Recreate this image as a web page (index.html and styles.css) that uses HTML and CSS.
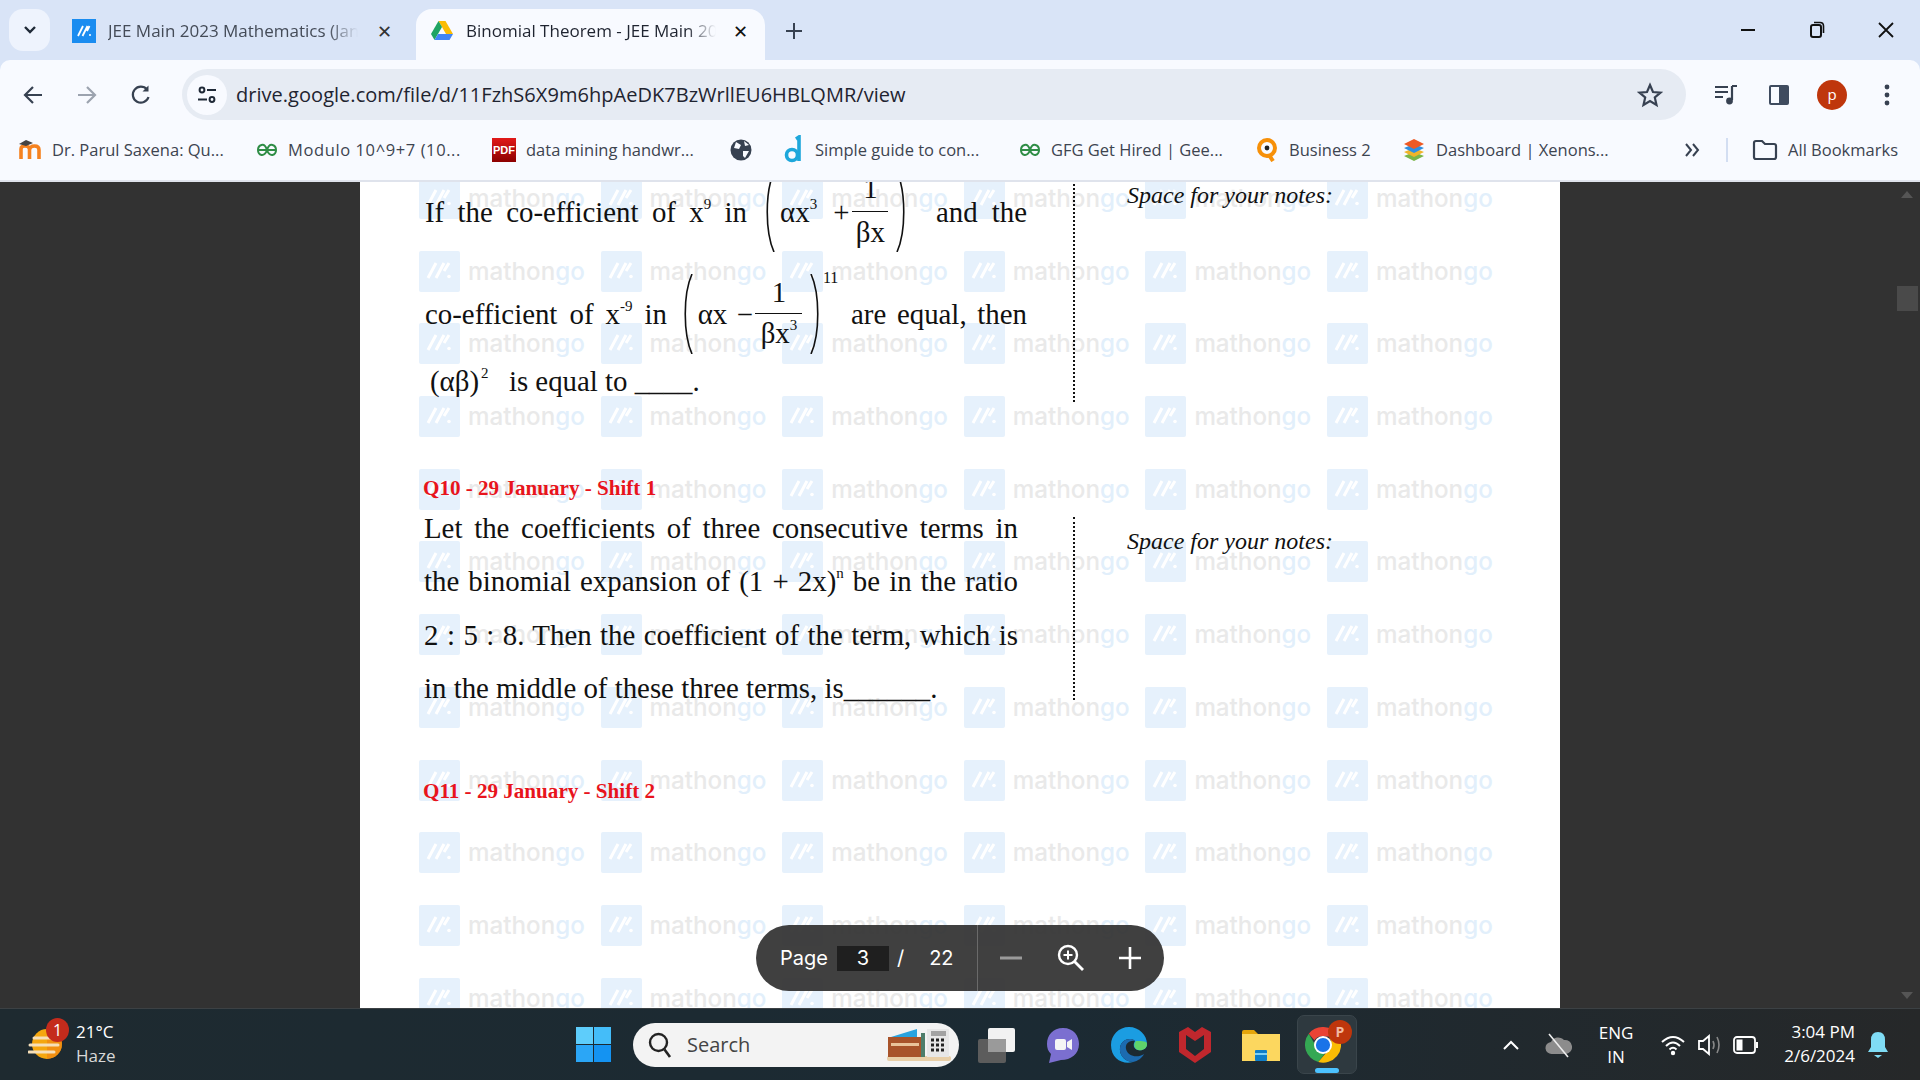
FILE: index.html
```html
<!DOCTYPE html>
<html>
<head>
<meta charset="utf-8">
<title>Binomial Theorem - JEE Main 2023</title>
<link rel="stylesheet" href="styles.css">
</head>
<body>
<svg class="defs" width="0" height="0">
    <symbol id="wmLogo" viewBox="0 0 41 41">
        <rect width="41" height="41" rx="2" fill="#e6f1fc"/>
        <path d="M9 27 L17 12 M17 27 L25 12 M25 20 L30 12" stroke="#fff" stroke-width="3" fill="none"/>
        <circle cx="30" cy="25.5" r="1.8" fill="#fff"/>
    </symbol>
</svg>

<div class="tabstrip">
    <div class="tab-search">
        <svg width="14" height="10" viewBox="0 0 14 10"><path d="M2 2 L7 7 L12 2" stroke="#1f2937" stroke-width="2.4" fill="none"/></svg>
    </div>
    <div class="tab">
        <svg class="tab-icon" width="24" height="24" viewBox="0 0 24 24"><rect width="24" height="24" fill="#1a8cf0"/><path d="M6 17 L11 7 M10.5 17 L15.5 7 M15 12 L17.5 7" stroke="#fff" stroke-width="1.8"/><circle cx="18" cy="16" r="1" fill="#fff"/></svg>
        <span class="tab-title">JEE Main 2023 Mathematics (Jan</span>
        <span class="tab-close">✕</span>
    </div>
    <div class="tab tab-active">
        <svg class="tab-icon" width="24" height="24" viewBox="0 0 24 24">
            <path d="M8.5 2 L15.5 2 L23 15 L16 15 Z" fill="#fbbc04"/>
            <path d="M8.5 2 L1 15 L4.5 21 L12 8 Z" fill="#1fa463"/>
            <path d="M4.5 21 L19.5 21 L23 15 L8 15 Z" fill="#4285f4"/>
        </svg>
        <span class="tab-title">Binomial Theorem - JEE Main 20</span>
        <span class="tab-close">✕</span>
    </div>
    <svg class="tab-plus" width="18" height="18" viewBox="0 0 18 18"><path d="M9 1 V17 M1 9 H17" stroke="#374151" stroke-width="2"/></svg>
    <div class="win-controls">
        <svg width="16" height="16" viewBox="0 0 16 16"><path d="M1 8 H15" stroke="#111" stroke-width="2"/></svg>
        <svg width="16" height="18" viewBox="0 0 16 18"><rect x="2" y="4" width="10" height="12" rx="2" stroke="#111" stroke-width="2" fill="none"/><path d="M5 1.5 H11 Q14.5 1.5 14.5 5 V12" stroke="#111" stroke-width="1.6" fill="none"/></svg>
        <svg width="16" height="16" viewBox="0 0 16 16"><path d="M1 1 L15 15 M15 1 L1 15" stroke="#111" stroke-width="1.8"/></svg>
    </div>
</div>

<div class="toolbar">
    <svg class="nav-icon" width="22" height="22" viewBox="0 0 22 22"><path d="M20 11 H3 M11 3 L3 11 L11 19" stroke="#374151" stroke-width="2.2" fill="none"/></svg>
    <svg class="nav-icon" width="22" height="22" viewBox="0 0 22 22"><path d="M2 11 H19 M11 3 L19 11 L11 19" stroke="#9ca3af" stroke-width="2.2" fill="none"/></svg>
    <svg class="nav-icon" width="22" height="22" viewBox="0 0 22 22"><path d="M18.5 13 A8 8 0 1 1 17 5.5" stroke="#374151" stroke-width="2.2" fill="none"/><path d="M18.5 1.5 V7.5 H12.5 Z" fill="#374151"/></svg>
    <div class="omnibox">
        <div class="site-info">
            <svg width="22" height="22" viewBox="0 0 22 22"><circle cx="6" cy="6" r="2.4" stroke="#1f2937" stroke-width="2" fill="none"/><path d="M11 6 H20 M2 15.5 H11" stroke="#1f2937" stroke-width="2.2" fill="none"/><circle cx="16" cy="15.5" r="2.4" stroke="#1f2937" stroke-width="2" fill="none"/></svg>
        </div>
        <span class="url">drive.google.com/file/d/11FzhS6X9m6hpAeDK7BzWrllEU6HBLQMR/view</span>
        <svg class="star" width="26" height="26" viewBox="0 0 26 26"><path d="M13 3 L16 10 L23.5 10.6 L17.8 15.5 L19.5 23 L13 19 L6.5 23 L8.2 15.5 L2.5 10.6 L10 10 Z" stroke="#374151" stroke-width="2.2" fill="none"/></svg>
    </div>
    <div class="toolbar-right">
        <svg width="24" height="22" viewBox="0 0 24 22"><path d="M1 3 H14 M1 8 H14 M1 13 H9" stroke="#374151" stroke-width="2.2"/><path d="M18 2 H23 M18 2 V16" stroke="#374151" stroke-width="2.2" fill="none"/><circle cx="15.5" cy="17" r="3.4" fill="#374151"/></svg>
        <svg width="22" height="22" viewBox="0 0 22 22"><rect x="1" y="1" width="20" height="20" rx="2" fill="#3f4b5f"/><rect x="3" y="3" width="8" height="16" fill="#f8faff"/></svg>
        <div class="avatar">p</div>
        <svg class="toolbar-dots" width="6" height="22" viewBox="0 0 6 22"><circle cx="3" cy="3" r="2.4" fill="#374151"/><circle cx="3" cy="11" r="2.4" fill="#374151"/><circle cx="3" cy="19" r="2.4" fill="#374151"/></svg>
    </div>
</div>

<div class="bookmarks">
    <div class="bm">
        <svg width="24" height="24" viewBox="0 0 24 24"><path d="M3 21 V11 Q3 8 7 8 Q11 8 11.5 11 V21 M11.5 12 Q12 8 16.5 8 Q21 8 21 12 V21" stroke="#f58220" stroke-width="3.6" fill="none"/><path d="M1 6 L8 2 L15 5 L8 8 Z" fill="#444"/></svg>
        <span class="bm-text">Dr. Parul Saxena: Qu...</span>
    </div>
    <div class="bm">
        <svg class="gfg" width="22" height="14" viewBox="0 0 22 14"><path d="M2 7 H20 M11 7 Q9 1 5.5 2 Q2 3 2 7 Q2 11 5.5 12 Q9 12.5 11 7 Q13 12.5 16.5 12 Q20 11 20 7 Q20 3 16.5 2 Q13 1 11 7" stroke="#2f8d46" stroke-width="2" fill="none"/></svg>
        <span class="bm-text bm-text-loose">Modulo 10^9+7 (10...</span>
    </div>
    <div class="bm">
        <div class="pdf-icon">PDF</div>
        <span class="bm-text">data mining handwr...</span>
    </div>
    <div class="bm">
        <svg width="22" height="22" viewBox="0 0 22 22"><circle cx="11" cy="11" r="10.5" fill="#374151"/><path d="M6 3 L11 6 L9 10 L4 9 Z M13 12 L19 12 L15 19 L13 17 Z M14 2 L19 6 L15 7 Z" fill="#f8faff"/></svg>
    </div>
    <div class="bm">
        <svg width="22" height="30" viewBox="0 0 22 30"><path d="M13 4 L16 2 V26" stroke="#1ea7db" stroke-width="3.6" fill="none"/><circle cx="9" cy="20" r="5.5" stroke="#1ea7db" stroke-width="3.6" fill="none"/></svg>
        <span class="bm-text">Simple guide to con...</span>
    </div>
    <div class="bm">
        <svg class="gfg" width="22" height="14" viewBox="0 0 22 14"><path d="M2 7 H20 M11 7 Q9 1 5.5 2 Q2 3 2 7 Q2 11 5.5 12 Q9 12.5 11 7 Q13 12.5 16.5 12 Q20 11 20 7 Q20 3 16.5 2 Q13 1 11 7" stroke="#2f8d46" stroke-width="2" fill="none"/></svg>
        <span class="bm-text">GFG Get Hired | Gee...</span>
    </div>
    <div class="bm">
        <svg width="24" height="24" viewBox="0 0 24 24"><circle cx="12" cy="10" r="8" stroke="#f79009" stroke-width="4" fill="none"/><circle cx="12" cy="10" r="2.4" fill="#222"/><path d="M14 17 L18 23" stroke="#f79009" stroke-width="4"/></svg>
        <span class="bm-short">Business 2</span>
    </div>
    <div class="bm">
        <svg width="24" height="24" viewBox="0 0 24 24"><path d="M12 14 L22 18 L12 23 L2 18 Z" fill="#7ab648"/><path d="M12 10 L22 14 L12 19 L2 14 Z" fill="#f0b429"/><path d="M12 6 L22 10 L12 15 L2 10 Z" fill="#2f8fe0"/><path d="M12 1 L22 6 L12 11 L2 6 Z" fill="#ee5a24"/></svg>
        <span class="bm-text">Dashboard | Xenons...</span>
    </div>
    <div class="bm-end">
        <svg width="16" height="14" viewBox="0 0 16 14"><path d="M2 1 L7 7 L2 13 M9 1 L14 7 L9 13" stroke="#374151" stroke-width="2" fill="none"/></svg>
        <div class="bm-sep"></div>
        <svg width="26" height="22" viewBox="0 0 26 22"><path d="M2 4 Q2 2 4 2 H10 L13 5 H22 Q24 5 24 7 V18 Q24 20 22 20 H4 Q2 20 2 18 Z" stroke="#374151" stroke-width="2.2" fill="none"/></svg>
        <span class="bm-all">All Bookmarks</span>
    </div>
</div>

<div class="viewer">
    <div class="page">
        <div class="watermark" id="watermark"></div>
        <div class="page-content">
            <div class="question q-first">
                <div class="q-body">
                    <div class="row row-tall">
                        <span class="words w-if">If the co-efficient of x<sup>9</sup> in</span>
                        <span class="math math-first">
                            <svg class="fence" width="14" height="80" viewBox="0 0 14 80"><path d="M12 0 C3 20 3 60 12 80" stroke="#111" stroke-width="1.6" fill="none"/></svg>
                            <span class="term">αx<sup>3</sup></span>
                            <span class="op op-plus">+</span>
                            <span class="frac"><span class="frac-num">1</span><span class="frac-den">βx</span></span>
                            <svg class="fence" width="14" height="80" viewBox="0 0 14 80"><path d="M2 0 C11 20 11 60 2 80" stroke="#111" stroke-width="1.6" fill="none"/></svg>
                        </span>
                        <span class="words w-and">and the</span>
                    </div>
                    <div class="row row-tall row-second">
                        <span class="words w-coef">co-efficient of x<sup>-9</sup> in</span>
                        <span class="math">
                            <svg class="fence" width="14" height="80" viewBox="0 0 14 80"><path d="M12 0 C3 20 3 60 12 80" stroke="#111" stroke-width="1.6" fill="none"/></svg>
                            <span class="term">αx</span>
                            <span class="op op-minus">−</span>
                            <span class="frac frac-wide"><span class="frac-num frac-num-low">1</span><span class="frac-den frac-den-tight">βx<sup>3</sup></span></span>
                            <svg class="fence" width="14" height="80" viewBox="0 0 14 80"><path d="M2 0 C11 20 11 60 2 80" stroke="#111" stroke-width="1.6" fill="none"/></svg>
                            <sup class="power">11</sup>
                        </span>
                        <span class="words w-are">are equal, then</span>
                    </div>
                    <div class="row-last">(αβ)<sup>2</sup>&nbsp; is equal to ____.</div>
                </div>
                <div class="notes notes-first">Space for your notes:</div>
            </div>

            <div class="q-heading q10">Q10 - 29 January - Shift 1</div>
            <div class="question q-second">
                <div class="q-body">
                    <div class="text-lines">
                        <div class="tline tline-just">Let the coefficients of three consecutive terms in</div>
                        <div class="tline tline-just">the binomial expansion of (1 + 2x)<sup>n</sup> be in the ratio</div>
                        <div class="tline tline-just">2 : 5 : 8. Then the coefficient of the term, which is</div>
                        <div class="tline">in the middle of these three terms, is______.</div>
                    </div>
                </div>
                <div class="notes notes-second">Space for your notes:</div>
            </div>
            <div class="q-heading q11">Q11 - 29 January - Shift 2</div>
        </div>
    </div>

    <div class="scroll-up"></div>
    <div class="scroll-thumb"></div>
    <div class="scroll-down"></div>

    <div class="pdf-bar">
        <span class="pdf-label">Page</span>
        <span class="pdf-input">3</span>
        <span class="pdf-slash">/</span>
        <span class="pdf-total">22</span>
        <div class="pdf-divider"></div>
        <svg class="pdf-minus" width="22" height="4" viewBox="0 0 22 4"><rect width="22" height="3" y="0.5" fill="#9a9a9a"/></svg>
        <svg class="pdf-zoom" width="28" height="28" viewBox="0 0 28 28"><circle cx="11" cy="11" r="9" stroke="#fff" stroke-width="2.4" fill="none"/><path d="M17.5 17.5 L26 26" stroke="#fff" stroke-width="2.8"/><path d="M11 6.5 V15.5 M6.5 11 H15.5" stroke="#fff" stroke-width="2"/></svg>
        <svg class="pdf-plus" width="22" height="22" viewBox="0 0 22 22"><path d="M11 0 V22 M0 11 H22" stroke="#fff" stroke-width="2.6"/></svg>
    </div>
</div>

<div class="taskbar">
    <div class="weather">
        <svg class="weather-icon" width="36" height="32" viewBox="0 0 36 32"><circle cx="19" cy="15" r="15" fill="#f5a70f"/><path d="M19 0 A15 15 0 0 1 19 30 Z" fill="#ef7f13" opacity="0.6"/><path d="M6 9 H24 M2 16 H30 M1 23 H26" stroke="#f6dfb8" stroke-width="3" stroke-linecap="round"/></svg>
        <span class="weather-badge">1</span>
        <div class="weather-text"><span>21°C</span><span class="weather-sub">Haze</span></div>
    </div>
    <svg class="win-logo" width="35" height="35" viewBox="0 0 35 35"><rect width="17" height="17" fill="#5ecdfb"/><rect x="18" width="17" height="17" fill="#44bdf9"/><rect y="18" width="17" height="17" fill="#2ba6f6"/><rect x="18" y="18" width="17" height="17" fill="#1493f2"/></svg>
    <div class="task-search">
        <svg width="24" height="26" viewBox="0 0 24 26"><circle cx="10.5" cy="10.5" r="8.5" stroke="#222" stroke-width="2.4" fill="none"/><path d="M16.5 17.5 L22 25" stroke="#222" stroke-width="2.6"/></svg>
        <span class="task-search-text">Search</span>
        <svg class="search-art" width="70" height="34" viewBox="0 0 70 34"><rect x="2" y="28" width="64" height="5" rx="2" fill="#e8cfa8"/><rect x="3" y="9" width="36" height="20" fill="#a8532a"/><path d="M6 9 L32 1 V9 Z" fill="#29a3e0"/><rect x="36" y="5" width="4" height="24" fill="#4d7d6a"/><rect x="6" y="15" width="28" height="3" fill="#e9c39a"/><rect x="42" y="1" width="22" height="28" fill="#e7e7e7"/><rect x="46" y="3" width="15" height="5" fill="#a3a3a3"/><path d="M46 12 H61 M46 17 H61 M46 22 H61" stroke="#222" stroke-width="3" stroke-dasharray="3 2"/></svg>
    </div>
    <div class="task-apps">
        <div class="task-app"><svg width="38" height="36" viewBox="0 0 38 36"><rect x="0" y="12" width="28" height="24" rx="2" fill="#5c5c5c"/><rect x="10" y="1" width="27" height="24" rx="2" fill="#f2f2f2"/><rect x="10" y="12" width="18" height="13" fill="#9a9a9a"/></svg></div>
        <div class="task-app"><svg width="34" height="36" viewBox="0 0 34 36"><path d="M17 1 C28 1 33 9 33 17 C33 27 25 33 15 33 L3 36 L5 27 C2 24 1 21 1 17 C1 8 7 1 17 1 Z" fill="#7b6fd0"/><rect x="9" y="12" width="11" height="11" rx="2" fill="#f5f5f5"/><path d="M21 15 L26 12 V23 L21 20 Z" fill="#f5f5f5"/></svg></div>
        <div class="task-app"><svg width="36" height="36" viewBox="0 0 36 36"><path d="M18 0 C28 0 36 8 36 17 C36 22 31 24 27 23 C22 22 22 17 24 14 C20 10 10 12 9 21 C8 29 15 35 22 35 C12 38 0 32 0 18 C0 8 8 0 18 0 Z" fill="#1b9de2"/><path d="M9 21 C8 29 15 35 22 35 C27 34 31 31 33 27 C27 31 17 30 15 22 C14 17 18 13 24 14 C20 10 10 12 9 21 Z" fill="#1c6bb0"/><path d="M25 14 C32 14 36 14 36 17 C36 22 31 24 27 23 C23 22 22 17 25 14 Z" fill="#5fd36a"/></svg></div>
        <div class="task-app"><svg width="32" height="36" viewBox="0 0 32 36"><path d="M0 5 L9 0 L16 5 L23 0 L32 5 V25 L16 36 L0 25 Z" fill="#c0272d"/><path d="M7 8 L16 14 L25 8 V22 L16 29 L7 22 Z" fill="#1e2a30"/></svg></div>
        <div class="task-app"><svg width="38" height="32" viewBox="0 0 38 32"><path d="M0 3 Q0 1 2 1 H12 L16 5 H37 V12 H0 Z" fill="#e5a50a"/><rect x="0" y="5" width="38" height="27" fill="#fcd75f"/><rect x="13" y="21" width="12" height="11" rx="1" fill="#0f7ec9"/><rect x="13" y="24" width="12" height="2" fill="#7fd0f5"/></svg></div>
        <div class="task-app">
            <div class="task-chrome">
                <svg class="chrome-icon" width="36" height="36" viewBox="0 0 38 38">
                    <path d="M19 0 A19 19 0 0 1 36 10 H19 A9 9 0 0 0 10 14 L4 7 A19 19 0 0 1 19 0 Z" fill="#ea4335"/>
                    <path d="M4 7 L13 23 A9 9 0 0 0 21 28 L14 37 A19 19 0 0 1 4 7 Z" fill="#34a853"/>
                    <path d="M36 10 A19 19 0 0 1 14 37 L25 24 A9 9 0 0 0 26 12 Z" fill="#fbbc04"/>
                    <circle cx="19" cy="19" r="9.5" fill="#fff"/><circle cx="19" cy="19" r="7.5" fill="#1a73e8"/>
                </svg>
                <span class="chrome-badge">P</span>
                <span class="chrome-bar"></span>
            </div>
        </div>
    </div>
    <div class="tray">
        <svg class="tray-up" width="16" height="10" viewBox="0 0 16 10"><path d="M1 9 L8 2 L15 9" stroke="#fff" stroke-width="2" fill="none"/></svg>
        <svg class="tray-cloud" width="28" height="26" viewBox="0 0 28 26"><path d="M8 22 A6 6 0 0 1 7 10 A8 8 0 0 1 20 8 A6 6 0 0 1 22 22 Z" fill="#8c8c8c"/><path d="M5 2 L24 25" stroke="#eee" stroke-width="1.6"/></svg>
        <div class="tray-lang"><span>ENG</span><span>IN</span></div>
        <svg class="tray-wifi" width="24" height="22" viewBox="0 0 24 22"><path d="M1 8 Q12 -2 23 8 M5 12 Q12 5 19 12 M8.5 15.5 Q12 12 15.5 15.5" stroke="#fff" stroke-width="2" fill="none"/><circle cx="12" cy="19" r="2.2" fill="#fff"/></svg>
        <svg class="tray-sound" width="24" height="24" viewBox="0 0 24 24"><path d="M1 8 H5 L11 3 V21 L5 16 H1 Z" stroke="#fff" stroke-width="1.8" fill="none"/><path d="M15 8 Q17 12 15 16 M19 4 Q23 12 19 20" stroke="#888" stroke-width="1.6" fill="none"/></svg>
        <svg class="tray-battery" width="26" height="18" viewBox="0 0 26 18"><rect x="1" y="1" width="21" height="16" rx="3" stroke="#fff" stroke-width="1.8" fill="none"/><rect x="3.5" y="3.5" width="6" height="11" fill="#fff"/><rect x="23" y="6" width="2" height="6" fill="#fff"/></svg>
        <div class="tray-clock"><span>3:04 PM</span><span>2/6/2024</span></div>
        <svg class="tray-bell" width="22" height="28" viewBox="0 0 22 28"><path d="M11 1 Q18 1 18 9 V16 L21 21 H1 L4 16 V9 Q4 1 11 1 Z" fill="#7fdcf5"/><path d="M7 24 H15 L11 27 Z" fill="#7fdcf5"/></svg>
    </div>
</div>

<script>
// watermark tiles repeat across the whole pdf page
var layer = document.getElementById('watermark');
var html = '';
for (var i = 0; i < 72; i++) {
    html += '<div class="wm-tile"><svg width="41" height="41"><use href="#wmLogo"/></svg>' +
        '<span class="wm-text">mathon<span class="wm-go">go</span></span></div>';
}
layer.innerHTML = html;
</script>
</body>
</html>
```

FILE: styles.css
```css
html, body {
    margin: 0;
    width: 1920px;
    height: 1080px;
    overflow: hidden;
    background-color: #d9e4f7;
    font-family: "Open Sans", "Noto Sans", sans-serif;
}

.defs {
    display: block;
    height: 0;
}

/* tab strip */
.tabstrip {
    height: 60px;
    background-color: #d9e4f7;
    display: flex;
    align-items: flex-end;
    box-sizing: border-box;
}

.tab-search {
    width: 41px;
    height: 42px;
    margin: 0 22px 9px 9px;
    background-color: #eef3fd;
    border-radius: 14px;
    display: flex;
    align-items: center;
    justify-content: center;
}

.tab {
    height: 51px;
    width: 344px;
    display: flex;
    align-items: center;
    box-sizing: border-box;
    font-size: 17px;
    color: #444b57;
}

.tab-icon {
    flex: none;
    margin-right: 12px;
    margin-top: -8px;
}

.tab-title {
    width: 250px;
    white-space: nowrap;
    overflow: hidden;
    margin-top: -8px;
    -webkit-mask-image: linear-gradient(to right, #000 88%, transparent 100%);
    mask-image: linear-gradient(to right, #000 88%, transparent 100%);
}

.tab-close {
    margin-left: 19px;
    margin-top: -8px;
    font-size: 18px;
    color: #333;
}

.tab-active {
    width: 349px;
    padding-left: 14px;
    background-color: #f8faff;
    border-radius: 16px 16px 0 0;
    color: #1f2430;
}

.tab-active .tab-close {
    margin-left: 17px;
    color: #111;
}

.tab-plus {
    margin: 0 0 20px 20px;
}

.win-controls {
    margin: 0 26px 21px auto;
    display: flex;
    align-items: center;
    gap: 53px;
}

/* toolbar */
.toolbar {
    height: 60px;
    background-color: #f8faff;
    border-radius: 10px 10px 0 0;
    display: flex;
    align-items: center;
    padding: 9px 0 0 22px;
    box-sizing: border-box;
}

.nav-icon {
    margin-right: 32px;
}

.nav-icon:nth-of-type(3) {
    margin-right: 30px;
}

.omnibox {
    width: 1504px;
    height: 51px;
    background-color: #e6ebf3;
    border-radius: 26px;
    display: flex;
    align-items: center;
    box-sizing: border-box;
    padding-left: 5px;
}

.site-info {
    width: 40px;
    height: 40px;
    border-radius: 50%;
    background-color: #f8faff;
    display: flex;
    align-items: center;
    justify-content: center;
    flex: none;
}

.url {
    margin-left: 9px;
    font-size: 20px;
    letter-spacing: 0.03px;
    color: #1f2430;
    white-space: nowrap;
}

.star {
    margin-left: auto;
    margin-right: 23px;
}

.toolbar-right {
    display: flex;
    align-items: center;
    margin-left: 28px;
    gap: 30px;
}

.avatar {
    width: 30px;
    height: 30px;
    border-radius: 50%;
    background-color: #bf360c;
    color: #fff;
    font-size: 15px;
    text-align: center;
    line-height: 28px;
    margin-left: -3px;
}

.toolbar-dots {
    margin-left: 7px;
}

/* bookmarks */
.bookmarks {
    height: 60px;
    background-color: #f8faff;
    border-bottom: 2px solid #dfe3ec;
    display: flex;
    align-items: center;
    padding-left: 18px;
    gap: 31px;
    font-size: 16.5px;
    color: #3d4450;
}

.bm {
    display: flex;
    align-items: center;
    gap: 10px;
    white-space: nowrap;
}

.bm-text {
    width: 173px;
    margin-top: -2px;
}

.bm-text-loose {
    letter-spacing: 0.6px;
}

.bm-short {
    width: 82px;
    margin-top: -2px;
}

.bm-all {
    margin-top: -2px;
    margin-left: 10px;
}

.pdf-icon {
    width: 24px;
    height: 24px;
    background: linear-gradient(#e11919, #8c0000);
    color: #fff;
    font-size: 11px;
    font-weight: 700;
    line-height: 24px;
    text-align: center;
    font-family: "Liberation Sans", sans-serif;
}

.bm-end {
    margin-left: auto;
    margin-right: 22px;
    display: flex;
    align-items: center;
    white-space: nowrap;
}

.bm-sep {
    width: 2px;
    height: 24px;
    background-color: #d3def2;
    margin: 0 24px 0 26px;
}

/* viewer and pdf page */
.viewer {
    height: 826px;
    background-color: #323232;
    position: relative;
    overflow: hidden;
}

.page {
    width: 1200px;
    height: 826px;
    margin-left: 360px;
    background-color: #fff;
    position: relative;
    overflow: hidden;
}

.watermark {
    position: absolute;
    top: -4px;
    left: 59px;
    display: grid;
    grid-template-columns: repeat(6, 181.6px);
    grid-auto-rows: 41px;
    row-gap: 31.7px;
}

.wm-tile {
    display: flex;
    align-items: center;
    gap: 8px;
    white-space: nowrap;
}

.wm-text {
    font-family: Inter, sans-serif;
    font-size: 24.2px;
    font-weight: 500;
    color: #e9e9e9;
}

.wm-go {
    color: #e2effb;
}

.page-content {
    position: relative;
    padding-left: 64px;
    margin-top: -10px;
    font-family: "Liberation Serif", "Times New Roman", serif;
    font-size: 28.85px;
    color: #111;
}

.question {
    display: flex;
}

.q-body {
    width: 651px;
    box-sizing: border-box;
    padding-right: 46px;
    border-right: 2px dotted #111;
    flex: none;
}

.q-first {
    height: 230px;
}

.q-second {
    height: 183px;
}

.row {
    display: flex;
    align-items: center;
    justify-content: space-between;
    white-space: nowrap;
}

.row-tall {
    height: 80px;
}

.row-second {
    margin-top: 22px;
}

.row-last {
    margin: 11px 0 0 6px;
    line-height: 32px;
    white-space: nowrap;
}

.row-last sup {
    margin: 0 6px 0 2px;
}

.words {
    display: block;
    text-align: justify;
    text-align-last: justify;
    white-space: normal;
}

.w-if {
    width: 322px;
    margin-left: 1px;
}

.w-and {
    width: 91px;
}

.w-coef {
    width: 242px;
    margin-left: 1px;
}

.w-are {
    width: 176px;
}

sup {
    font-size: 15px;
    line-height: 0;
    vertical-align: 13px;
}

.math {
    display: flex;
    align-items: center;
}

.math-first {
    margin-right: 12px;
}

.term {
    margin-left: 4px;
}

.op-plus {
    margin: 0 3px 0 16px;
}

.op-minus {
    margin: 0 2.5px 0 9.5px;
}

.frac {
    display: flex;
    flex-direction: column;
    align-items: center;
    width: 36px;
    margin-right: 6.5px;
}

.frac-wide {
    width: 47px;
}

.frac-num {
    height: 46px;
    line-height: 44px;
    border-bottom: 1.5px solid #111;
    width: 100%;
    text-align: center;
    box-sizing: border-box;
}

.frac-num-low {
    line-height: 49px;
}

.frac-den {
    height: 46px;
    line-height: 40px;
}

.frac-den-tight {
    line-height: 39px;
}

.power {
    align-self: flex-start;
    font-size: 16px;
    line-height: 20px;
    margin: 0;
    vertical-align: baseline;
}

.notes {
    margin-left: 52px;
    font-style: italic;
    font-size: 24px;
    line-height: 30px;
    white-space: nowrap;
}

.notes-first {
    padding-top: 8px;
}

.notes-second {
    padding-top: 9px;
}

.q-heading {
    font-weight: bold;
    font-size: 21.1px;
    line-height: 26px;
    color: #e8141c;
    margin-left: -1px;
    width: 260px;
}

.q10 {
    margin-top: 73px;
    margin-bottom: 16px;
}

.q11 {
    margin-top: 78px;
}

.text-lines {
    margin-top: -15px;
    line-height: 53.4px;
}

.tline {
    width: 594px;
    white-space: nowrap;
}

.tline-just {
    white-space: normal;
    text-align: justify;
    text-align-last: justify;
}

/* dark scrollbar */
.scroll-up, .scroll-down {
    position: absolute;
    right: 7px;
    width: 0;
    height: 0;
    border-left: 6px solid transparent;
    border-right: 6px solid transparent;
}

.scroll-up {
    top: 9px;
    border-bottom: 7px solid #555;
}

.scroll-down {
    bottom: 9px;
    border-top: 7px solid #555;
}

.scroll-thumb {
    position: absolute;
    right: 2px;
    top: 104px;
    width: 21px;
    height: 25px;
    background-color: #4a4a4a;
}

/* page controls over the pdf */
.pdf-bar {
    position: absolute;
    left: 756px;
    top: 743px;
    width: 408px;
    height: 66px;
    box-sizing: border-box;
    border-radius: 33px;
    background-color: rgba(50, 50, 50, 0.93);
    color: #fff;
    display: flex;
    align-items: center;
    padding-left: 24px;
    font-family: Inter, "Open Sans", sans-serif;
    font-size: 20px;
}

.pdf-input {
    width: 52px;
    height: 25px;
    line-height: 25px;
    background-color: #1f1f1f;
    text-align: center;
    margin-left: 9px;
}

.pdf-slash {
    margin-left: 8px;
}

.pdf-total {
    margin-left: 25px;
}

.pdf-divider {
    width: 1px;
    height: 66px;
    background-color: #6a6a6a;
    margin-left: 23px;
}

.pdf-minus {
    margin-left: 22px;
}

.pdf-zoom {
    margin-left: 35px;
}

.pdf-plus {
    margin-left: 34.5px;
}

/* windows taskbar */
.taskbar {
    height: 72px;
    box-sizing: border-box;
    border-top: 1px solid #3c4144;
    background: linear-gradient(to right, #1e2a30, #1b2a33 55%, #262829);
    display: flex;
    align-items: center;
    color: #fff;
    font-size: 17px;
}

.weather {
    width: 576px;
    display: flex;
    align-items: center;
    position: relative;
    flex: none;
    box-sizing: border-box;
    padding-left: 28px;
}

.weather-badge {
    position: absolute;
    left: 46px;
    top: -4px;
    width: 23px;
    height: 24px;
    border-radius: 50%;
    background-color: #c42b1c;
    text-align: center;
    line-height: 24px;
    font-size: 16px;
}

.weather-text {
    display: flex;
    flex-direction: column;
    margin: -2px 0 0 12px;
    line-height: 24px;
}

.weather-sub {
    color: #d8d8d8;
}

.task-search {
    width: 326px;
    height: 44px;
    margin-left: 22px;
    background-color: #f3f3f3;
    border-radius: 22px;
    display: flex;
    align-items: center;
    box-sizing: border-box;
    padding-left: 15px;
    color: #444;
    font-size: 20px;
    flex: none;
}

.task-search-text {
    margin-left: 15px;
}

.search-art {
    margin-left: auto;
    margin-right: 4px;
}

.task-apps {
    display: flex;
    align-items: center;
    margin-left: 5px;
}

.task-app {
    width: 66px;
    display: flex;
    align-items: center;
    justify-content: center;
}

.task-chrome {
    width: 60px;
    height: 59px;
    box-sizing: border-box;
    background-color: #2e393f;
    border: 1px solid #3a454b;
    border-radius: 7px;
    position: relative;
    display: flex;
    align-items: center;
    justify-content: center;
}

.chrome-icon {
    margin-right: 8px;
}

.chrome-badge {
    position: absolute;
    top: 4px;
    right: 4px;
    width: 24px;
    height: 24px;
    border-radius: 50%;
    background-color: #bf360c;
    font-size: 14px;
    font-weight: 700;
    line-height: 24px;
    text-align: center;
    color: #f2b8a0;
}

.chrome-bar {
    position: absolute;
    left: 17px;
    bottom: 0;
    width: 24px;
    height: 5px;
    border-radius: 3px;
    background-color: #4cc2ff;
}

.tray {
    display: flex;
    align-items: center;
    margin-left: 143px;
}

.tray-cloud {
    margin-left: 25px;
}

.tray-lang {
    display: flex;
    flex-direction: column;
    align-items: center;
    width: 36px;
    margin-left: 26px;
    line-height: 24px;
}

.tray-wifi {
    margin-left: 27px;
}

.tray-sound {
    margin-left: 13px;
}

.tray-battery {
    margin-left: 11px;
}

.tray-clock {
    display: flex;
    flex-direction: column;
    align-items: flex-end;
    width: 84px;
    margin: -2px 0 0 12px;
    line-height: 24px;
}

.tray-bell {
    margin-left: 12px;
}
```
